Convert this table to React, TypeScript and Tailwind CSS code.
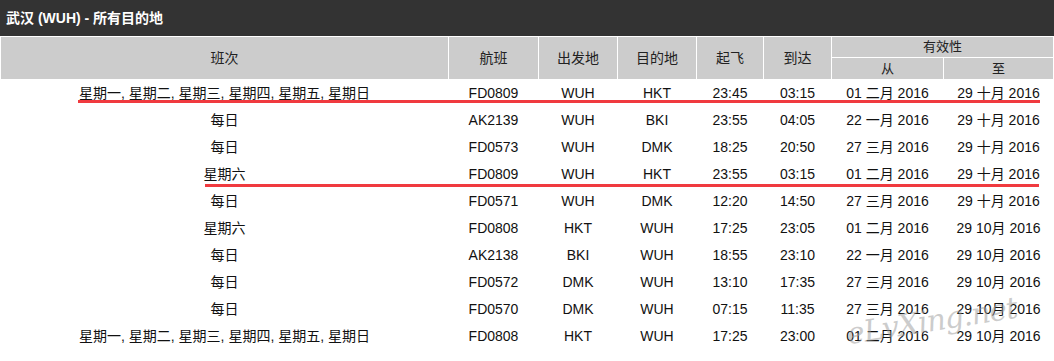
const rows = [
  ["星期一, 星期二, 星期三, 星期四, 星期五, 星期日", "FD0809", "WUH", "HKT", "23:45", "03:15", "01 二月 2016", "29 十月 2016"],
  ["每日", "AK2139", "WUH", "BKI", "23:55", "04:05", "22 一月 2016", "29 十月 2016"],
  ["每日", "FD0573", "WUH", "DMK", "18:25", "20:50", "27 三月 2016", "29 十月 2016"],
  ["星期六", "FD0809", "WUH", "HKT", "23:55", "03:15", "01 二月 2016", "29 十月 2016"],
  ["每日", "FD0571", "WUH", "DMK", "12:20", "14:50", "27 三月 2016", "29 十月 2016"],
  ["星期六", "FD0808", "HKT", "WUH", "17:25", "23:05", "01 二月 2016", "29 10月 2016"],
  ["每日", "AK2138", "BKI", "WUH", "18:55", "23:10", "22 一月 2016", "29 10月 2016"],
  ["每日", "FD0572", "DMK", "WUH", "13:10", "17:35", "27 三月 2016", "29 10月 2016"],
  ["每日", "FD0570", "DMK", "WUH", "07:15", "11:35", "27 三月 2016", "29 10月 2016"],
  ["星期一, 星期二, 星期三, 星期四, 星期五, 星期日", "FD0808", "HKT", "WUH", "17:25", "23:00", "01 二月 2016", "29 10月 2016"],
]

const font = "font-['Liberation_Sans','Noto_Sans_CJK_SC',sans-serif]"

export default function App() {
  return (
    <div className={`relative h-[361px] w-[1054px] overflow-hidden bg-white ${font}`}>
      <div className="flex h-[36px] items-center bg-[#333333] px-[6px] text-[14px] font-bold text-white">
        武汉 (WUH) - 所有目的地
      </div>

      <table className="w-[1054px] table-fixed border-separate border-spacing-[1px] text-[14px] text-[#111]">
        <colgroup>
          <col className="w-[447px]" />
          <col className="w-[89px]" />
          <col className="w-[78px]" />
          <col className="w-[78px]" />
          <col className="w-[66px]" />
          <col className="w-[67px]" />
          <col className="w-[111px]" />
          <col className="w-[109px]" />
        </colgroup>
        <thead>
          <tr className="h-[20px]">
            {["班次", "航班", "出发地", "目的地", "起飞", "到达"].map((h) => (
              <th key={h} rowSpan={2} className="bg-[#cccccc] p-0 text-center font-normal text-[#222]">
                {h}
              </th>
            ))}
            <th colSpan={2} className="bg-[#cccccc] p-0 text-center text-[13px] font-normal text-[#222]">
              有效性
            </th>
          </tr>
          <tr className="h-[21px]">
            <th className="bg-[#cccccc] p-0 text-center text-[13px] font-normal text-[#222]">从</th>
            <th className="bg-[#cccccc] p-0 text-center text-[13px] font-normal text-[#222]">至</th>
          </tr>
        </thead>
        <tbody>
          {rows.map((r, i) => (
            <tr key={i} className="h-[26px]">
              {r.map((c, j) => (
                <td key={j} className="whitespace-nowrap p-0 text-center leading-[26px]">
                  {c}
                </td>
              ))}
            </tr>
          ))}
        </tbody>
      </table>

      {/* red annotation lines */}
      <div className="absolute left-[78px] top-[100px] h-[3px] w-[962px] bg-[#f03a3f]" />
      <div className="absolute left-[205px] top-[184px] h-[3px] w-[834px] bg-[#f03a3f]" />

      {/* watermark */}
      <div className="pointer-events-none absolute left-[846px] top-[306px] -rotate-[9deg] font-['DejaVu_Serif',serif] text-[30px] italic leading-none tracking-[-1px] text-[#9a9a9a]/50">
        eLvXing.net
      </div>
    </div>
  )
}
